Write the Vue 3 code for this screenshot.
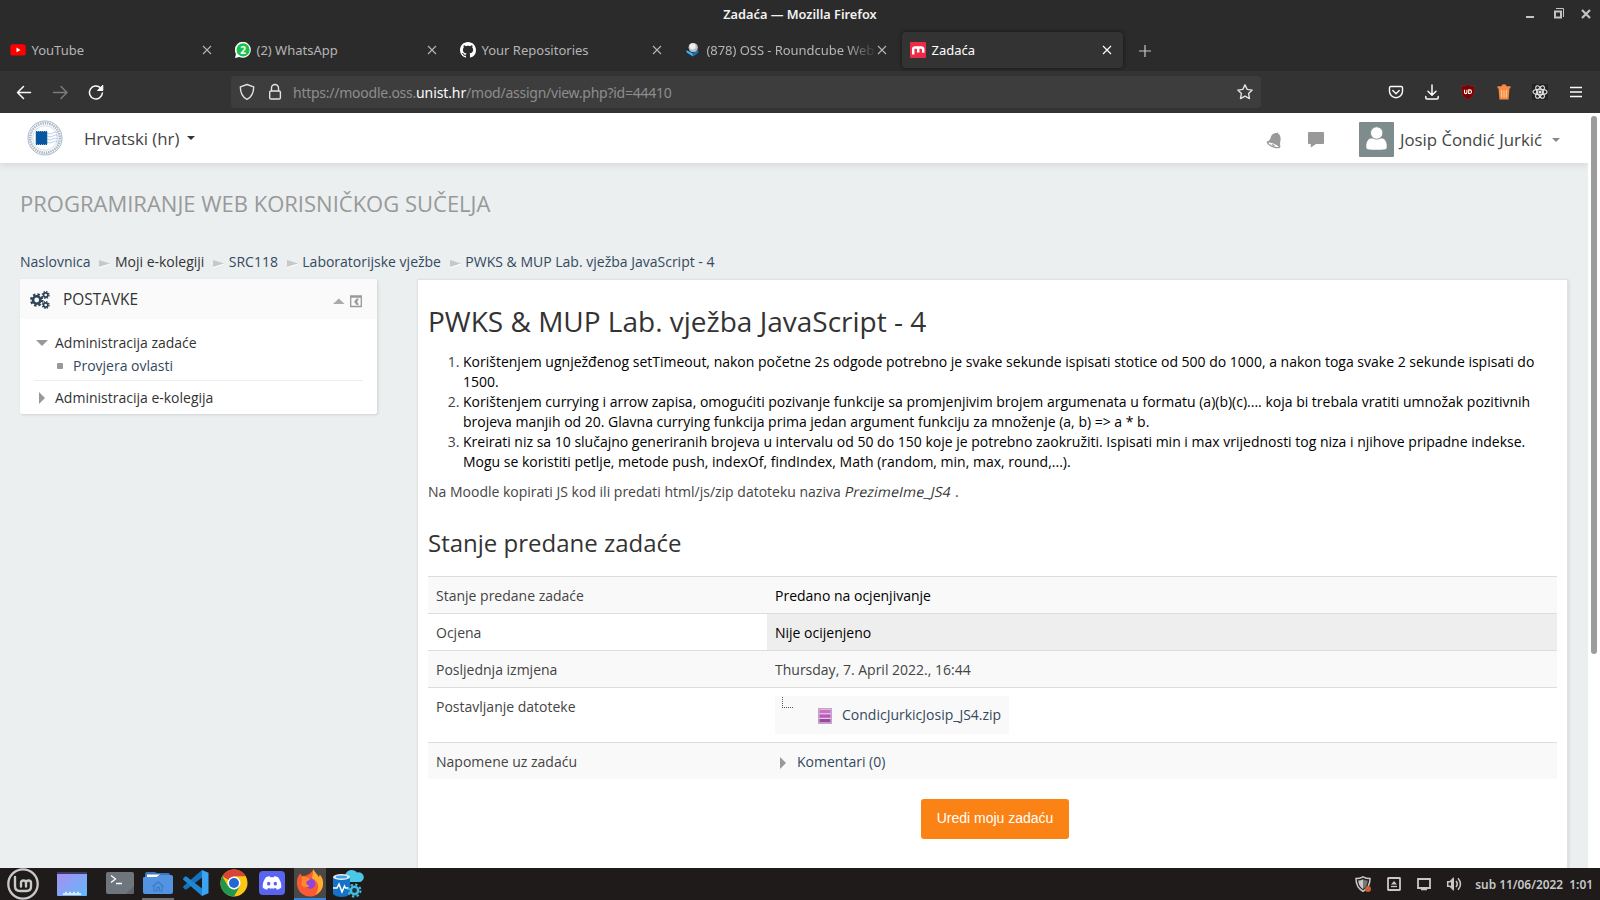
<script setup>
const tabs = [
  { id: 'youtube', title: 'YouTube' },
  { id: 'whatsapp', title: '(2) WhatsApp' },
  { id: 'github', title: 'Your Repositories' },
  { id: 'roundcube', title: '(878) OSS - Roundcube Web' },
  { id: 'moodle', title: 'Zadaća', active: true },
]
const crumbs = [
  { text: 'Naslovnica', link: true },
  { text: 'Moji e-kolegiji', link: false },
  { text: 'SRC118', link: true },
  { text: 'Laboratorijske vježbe', link: true },
  { text: 'PWKS & MUP Lab. vježba JavaScript - 4', link: true },
]
const tasks = [
  'Korištenjem ugnježđenog setTimeout, nakon početne 2s odgode potrebno je svake sekunde ispisati stotice od 500 do 1000, a nakon toga svake 2 sekunde ispisati do 1500.',
  'Korištenjem currying i arrow zapisa, omogućiti pozivanje funkcije sa promjenjivim brojem argumenata u formatu (a)(b)(c).... koja bi trebala vratiti umnožak pozitivnih brojeva manjih od 20. Glavna currying funkcija prima jedan argument funkciju za množenje (a, b) => a * b.',
  'Kreirati niz sa 10 slučajno generiranih brojeva u intervalu od 50 do 150 koje je potrebno zaokružiti. Ispisati min i max vrijednosti tog niza i njihove pripadne indekse. Mogu se koristiti petlje, metode push, indexOf, findIndex, Math (random, min, max, round,...).',
]
</script>

<template>
  <div class="screen">
    <header class="titlebar">
      <span class="window-title">Zadaća — Mozilla Firefox</span>
      <svg class="window-buttons" width="68" height="16" viewBox="0 0 68 16">
        <path d="M2 10h8v2H2z" fill="#c4c4c4" />
        <path d="M31 5.500h6v6h-6z" fill="none" stroke="#c4c4c4" stroke-width="2" />
        <path d="M32 2.500h7.500V11" fill="none" stroke="#c4c4c4" />
        <path d="M58 4l8 8M66 4l-8 8" stroke="#c4c4c4" stroke-width="2.200" />
      </svg>
    </header>

    <nav class="tabs">
      <div v-for="tab in tabs" :key="tab.id" class="tab" :class="{ active: tab.active }">
        <svg v-if="tab.id === 'youtube'" class="favicon" viewBox="0 0 16 16">
          <rect x="0.300" y="2.300" width="15.400" height="11.200" rx="2.600" fill="#f00" /><path d="M6.500 5.600v4.700L10.500 8z" fill="#fff" />
        </svg>
        <svg v-else-if="tab.id === 'whatsapp'" class="favicon" viewBox="0 0 16 16">
          <path d="M0 16l1-4A8 8 0 1 1 4.300 15z" fill="#fff" /><circle cx="8.100" cy="7.900" r="6.600" fill="#17c14b" />
          <text x="8" y="11.500" text-anchor="middle" font-size="10" font-weight="700" fill="#fff">2</text>
        </svg>
        <svg v-else-if="tab.id === 'github'" class="favicon" viewBox="0 0 16 16">
          <path fill="#fff" d="M8 0C3.580 0 0 3.580 0 8c0 3.540 2.290 6.530 5.470 7.590.4.070.55-.17.55-.38 0-.19-.01-.82-.01-1.490-2.010.37-2.530-.49-2.690-.94-.09-.23-.48-.94-.82-1.130-.28-.15-.68-.52-.01-.53.63-.01 1.080.58 1.230.82.72 1.210 1.870.87 2.330.66.07-.52.28-.87.51-1.070-1.780-.2-3.640-.89-3.640-3.950 0-.87.31-1.590.82-2.150-.08-.2-.36-1.020.08-2.120 0 0 .67-.21 2.200.82.64-.18 1.320-.27 2-.27s1.360.09 2 .27c1.530-1.040 2.200-.82 2.200-.82.44 1.100.16 1.920.08 2.120.51.56.82 1.270.82 2.150 0 3.070-1.870 3.750-3.650 3.950.29.25.54.73.54 1.480 0 1.070-.01 1.930-.01 2.200 0 .21.15.46.55.38A8 8 0 0 0 16 8c0-4.420-3.580-8-8-8z" />
        </svg>
        <svg v-else-if="tab.id === 'roundcube'" class="favicon" viewBox="0 0 16 16">
          <path d="M1.200 7.600L8 4l5.600 3.400v3.800L8 15 1.200 10.800z" fill="#123" />
          <path d="M1.500 8l6.400 3.600v3L1.500 10.600z" fill="#3fb2ed" /><path d="M7.900 11.600l5.500-4v3.500l-5.500 3.600z" fill="#1d70ae" />
          <circle cx="8.200" cy="5.600" r="4.700" fill="#b8bcbe" /><circle cx="7.600" cy="4.300" r="3.100" fill="#eee" />
        </svg>
        <svg v-else class="favicon" viewBox="0 0 16 16">
          <rect width="16" height="16" rx=".8" fill="#ee2b47" />
          <path d="M3.200 12.500V7.200Q3.200 5.500 5 5.500h6.200q2 0 2 2v3.200M8.200 6v4.600" fill="none" stroke="#fff" stroke-width="2.500" />
        </svg>
        <span class="tab-title" :class="{ faded: tab.id === 'roundcube' }">{{ tab.title }}</span>
        <svg class="tab-close" viewBox="0 0 10 10"><path d="M1 1l8 8M9 1L1 9" /></svg>
      </div>
      <svg class="new-tab" viewBox="0 0 12 12"><path d="M6 0v12M0 6h12" /></svg>
    </nav>

    <div class="toolbar">
      <svg class="nav-icons" width="120" height="32" viewBox="0 0 120 32" fill="none" stroke="#fbfbfb" stroke-width="1.500" stroke-linecap="round" stroke-linejoin="round">
        <path d="M30.500 16.500H17.500M23.500 10.500l-6 6 6 6" />
        <path d="M53.500 16.500H67M61 10.500l6 6-6 6" stroke="#7c7c7c" />
        <path d="M100.500 11.800A6.500 6.500 0 1 0 102.400 17" /><path d="M97.800 14.500h5V9.500z" fill="#fbfbfb" stroke-width="1" />
      </svg>
      <div class="urlbar">
        <svg class="url-icons" width="44" height="20" viewBox="0 0 44 20" fill="none" stroke="#e2e2e2" stroke-width="1.400" stroke-linejoin="round">
          <path d="M8 2.500l6.700 2.300c0 5.300-1.800 10.200-6.700 12.500C3.100 15 1.300 10.100 1.300 4.800z" />
          <rect x="30.700" y="9" width="10.700" height="8" rx="1.300" /><path d="M32.500 9V6a3.500 3.500 0 0 1 7 0v3" />
        </svg>
        <span class="url">https://moodle.oss.<b>unist.hr</b>/mod/assign/view.php?id=44410</span>
        <svg class="star" viewBox="0 0 18 18"><path d="M9 1.800l2.200 4.600 5 .7-3.600 3.500.9 5L9 13.200l-4.500 2.400.9-5L1.800 7.100l5-.7z" fill="none" stroke="#e2e2e2" stroke-width="1.400" stroke-linejoin="round" /></svg>
      </div>
      <div class="extensions">
        <svg viewBox="0 0 16 16" fill="none" stroke="#fbfbfb" stroke-width="1.400" stroke-linecap="round" stroke-linejoin="round"><path d="M2.800 2.500h10.400q1.300 0 1.300 1.300v3.400a6.500 6.500 0 0 1-13 0V3.800q0-1.300 1.300-1.300zM4.800 6.600L8 9.700l3.200-3.100" /></svg>
        <svg viewBox="0 0 16 16" fill="none" stroke="#fbfbfb" stroke-width="1.500" stroke-linecap="round" stroke-linejoin="round"><path d="M8 1v10M4 7.200l4 4 4-4M1.800 12.500v1.300q0 1.200 1.200 1.200h10q1.200 0 1.200-1.200v-1.300" /></svg>
        <svg viewBox="0 0 16 16"><path d="M8 .5c2 1.400 4.200 1.800 6.700 1.800 0 6.500-.7 10.300-6.700 13.400C2 12.600 1.300 8.800 1.300 2.300 3.800 2.300 6 1.900 8 .5z" fill="#800000" stroke="#6b3030" stroke-width=".7" /><path d="M4.500 5.800v2.800q0 1 1.200 1t1.200-1V5.800M8.700 5.900v3.600h1q1.800 0 1.800-1.800t-1.800-1.800z" fill="none" stroke="#fff" stroke-width="1.100" /></svg>
        <svg viewBox="0 0 16 16"><path d="M1.500 2.200h4l.7-1.700h3.600l.7 1.700h4v2h-1l-1 11.300h-9L2.500 4.200h-1z" fill="#f88c45" /><path d="M5.500 6l.3 7.500M8 6v7.500M10.500 6l-.3 7.500" stroke="#ffc79c" /></svg>
        <svg viewBox="0 0 16 16" fill="none" stroke="#e8e8e8" stroke-width="1.100"><rect width="16" height="16" fill="#242424" stroke="none" /><ellipse cx="8" cy="8" rx="7" ry="2.700" /><ellipse cx="8" cy="8" rx="7" ry="2.700" transform="rotate(60 8 8)" /><ellipse cx="8" cy="8" rx="7" ry="2.700" transform="rotate(120 8 8)" /><circle cx="8" cy="8" r="1" fill="#fff" /></svg>
        <svg viewBox="0 0 16 16" stroke="#fbfbfb" stroke-width="1.300"><path d="M2 3.500h12M2 8h12M2 12.500h12" /></svg>
      </div>
    </div>

    <div class="viewport">
      <div class="page">
        <header class="site-header">
          <svg class="crest" viewBox="0 0 36 36">
            <circle cx="18" cy="18" r="17" fill="#fff" stroke="#9db8d8" stroke-width="1" />
            <circle cx="18" cy="18" r="14.800" fill="none" stroke="#b3b8bc" stroke-width="2.600" stroke-dasharray="1.500 .8" />
            <circle cx="18" cy="18" r="12.300" fill="none" stroke="#bed0e5" stroke-width=".7" />
            <path d="M20 13q3 2 6 0t5 0M20 16q3 2 6 0t5 0M20 19q3 2 6 0t5 0M20 22q3 2 6 0t5 0" stroke="#a9c5e2" fill="none" stroke-width=".8" />
            <rect x="9" y="11.500" width="11" height="13" fill="#0757a0" stroke="#0757a0" stroke-dasharray="1 1" />
          </svg>
          <span class="language">Hrvatski (hr)</span>
          <i class="caret dark"></i>
          <div class="user-area">
            <svg class="bell" viewBox="0 0 16 18"><path d="M11.500 1.200L10.700 2C6.800 2 5.200 4.300 4.600 7 4 9 2.900 10 .9 10.500.3 11.600 1.200 13 3 14.300c2.600 1.900 7 3.300 9.700 2.900 1.400-.2 1.900-1 1.700-2-.6-1.600-.4-3 0-5.200.6-3.300.1-5.800-2.100-7.300z" fill="#999" /><path d="M2.200 11.700c2.500-.6 9 2 10.700 4.100-3 .9-8.700-1.300-10.700-4.100z" fill="#fff" /><path d="M5.300 13.600q1.500-.9 3.500.6 0 1-1 1.100-1.500-.6-2.500-1.700z" fill="#999" /></svg>
            <svg class="chat" viewBox="0 0 16 16"><path d="M1 0h14q1 0 1 1v10q0 1-1 1H8l-5.200 3.500V12H1q-1 0-1-1V1q0-1 1-1z" fill="#999" /></svg>
            <svg class="avatar" viewBox="0 0 35 35"><rect width="35" height="35" rx="1" fill="#7f8c8d" /><path d="M11 16.500c-4 2-4.500 9-3 10.600 1 1 18 1 19 0 1.500-1.600 1-8.600-3-10.600z" fill="#fff" /><circle cx="17.700" cy="11" r="6.200" fill="#fff" stroke="#7f8c8d" stroke-width=".9" /></svg>
            <span class="user-name">Josip Čondić Jurkić</span>
            <i class="caret"></i>
          </div>
        </header>

        <h1 class="course-title">PROGRAMIRANJE WEB KORISNIČKOG SUČELJA</h1>

        <nav class="breadcrumbs">
          <template v-for="(c, i) in crumbs" :key="c.text">
            <svg v-if="i" class="crumb-arrow" viewBox="0 0 11 8"><path d="M0 1l11 3.500L0 8z" fill="#fff" /><path d="M0 0l11 3.500L0 7z" fill="#c6c9ca" /></svg>
            <span :class="{ link: c.link }">{{ c.text }}</span>
          </template>
        </nav>

        <div class="columns">
          <aside class="block">
            <div class="block-head">
              <svg class="cogs" viewBox="0 0 20 18" fill="none" stroke="#2f4358">
                <circle cx="6.700" cy="9" r="3.700" stroke-width="2.600" /><circle cx="6.700" cy="9" r="5.600" stroke-width="2.200" stroke-dasharray="2.400 2" />
                <circle cx="15.700" cy="4" r="2.100" stroke-width="1.600" /><circle cx="15.700" cy="4" r="3.300" stroke-width="1.400" stroke-dasharray="1.400 1.190" />
                <circle cx="15.700" cy="14" r="2.100" stroke-width="1.600" /><circle cx="15.700" cy="14" r="3.300" stroke-width="1.400" stroke-dasharray="1.400 1.190" />
              </svg>
              <h2>POSTAVKE</h2>
              <svg class="block-actions" width="30" height="13" viewBox="0 0 30 13"><path d="M0 9l5.800-5.500L11.500 9z" fill="#aaa" /><path d="M17.700 1h10.600v10.500H17.700zM17.500 2h11" fill="none" stroke="#999" stroke-width="1.300" /><path d="M25.500 3.500v1.800h-1v3h1V10h-1.800L21 6.800l2.700-3.300z" fill="#999" /></svg>
            </div>
            <ul class="tree">
              <li><svg class="down" viewBox="0 0 12 6"><path d="M0 0h12L6 6z" fill="#999" /></svg>Administracija zadaće</li>
              <li class="leaf"><i></i><span class="link">Provjera ovlasti</span></li>
              <li class="last"><svg class="right" viewBox="0 0 6 12"><path d="M0 0l6 6-6 6z" fill="#999" /></svg>Administracija e-kolegija</li>
            </ul>
          </aside>

          <main class="content">
            <h2>PWKS &amp; MUP Lab. vježba JavaScript - 4</h2>
            <ol><li v-for="t in tasks" :key="t"><span>{{ t }}</span></li></ol>
            <p>Na Moodle kopirati JS kod ili predati html/js/zip datoteku naziva <em>PrezimeIme_JS4</em> .</p>
            <h3>Stanje predane zadaće</h3>
            <div class="status">
              <div class="row odd"><span>Stanje predane zadaće</span><span class="strong">Predano na ocjenjivanje</span></div>
              <div class="row"><span>Ocjena</span><span class="strong grade">Nije ocijenjeno</span></div>
              <div class="row odd"><span>Posljednja izmjena</span><span>Thursday, 7. April 2022., 16:44</span></div>
              <div class="row tall"><span>Postavljanje datoteke</span>
                <span class="files"><span class="file">
                  <i class="elbow"></i>
                  <svg class="zip" viewBox="0 0 16 16"><rect x="1.500" y=".5" width="13" height="15" fill="#d9b9df" stroke="#c3a5c9" /><path d="M2.500 2h11v3.300h-11z" fill="#cb6fc5" /><path d="M2.500 6.300h11v3.500h-11z" fill="#b759b5" /><path d="M2.500 11h11v3.300h-11z" fill="#984a9f" /><path d="M2.500 5.800h11M2.500 10.400h11" stroke="#ecd2ef" stroke-width=".7" /></svg>
                  <span class="link">CondicJurkicJosip_JS4.zip</span>
                </span></span>
              </div>
              <div class="row odd"><span>Napomene uz zadaću</span><span class="comments"><svg class="right" viewBox="0 0 6 12"><path d="M0 0l6 6-6 6z" fill="#999" /></svg><span class="link">Komentari (0)</span></span></div>
            </div>
            <button class="edit">Uredi moju zadaću</button>
          </main>
        </div>
      </div>
      <div class="scrollbar"><i></i></div>
    </div>

    <footer class="taskbar">
      <svg class="mint" viewBox="0 0 32 32" fill="none" stroke="#c9c9c9" stroke-linecap="round"><circle cx="16" cy="16" r="14.700" stroke-width="2.300" /><path d="M8 9v9q0 5 5 5h6.500q4.500 0 4.500-4.500V15q0-2.500-2.500-2.500T19 15v3.500M19 15q0-2.500-2.500-2.500T14 15v3.500" stroke-width="2.400" /></svg>
      <svg class="desktop" viewBox="0 0 30 24"><defs><linearGradient id="desk" x1="0" y1="0" x2="1" y2="1"><stop stop-color="#a88df0" /><stop offset="1" stop-color="#62b9fa" /></linearGradient></defs><rect width="30" height="24" rx="1" fill="url(#desk)" /><path d="M0 0h30v2H0z" fill="#3b3a68" /><path d="M6 23h18v-2H6z" fill="#d3e8fb" /><path d="M8 20.500h14" stroke="#d3e8fb" stroke-width="1.500" stroke-dasharray="2 2" /></svg>
      <svg class="terminal" viewBox="0 0 28 22"><rect width="28" height="22" rx="2" fill="#6e757d" /><path d="M28 14v6q0 2-2 2h-6z" fill="#5e646b" /><path d="M5 3.500l4.500 3.500L5 10.500M10 11.500h6" fill="none" stroke="#fff" stroke-width="1.300" /></svg>
      <span class="running"><svg class="folder" viewBox="0 0 30 22"><path d="M2 2q0-2 2-2h8l2 1h11q2 0 2 2v4H2z" fill="#3e77bd" /><path d="M4 2.500h13l-3 2.500H4z" fill="#fff" /><path d="M0 6q0-1 1-1h13l3-2h11q2 0 2 2v15q0 2-2 2H2q-2 0-2-2z" fill="#5294e2" /><path d="M9.500 14.500L15 9.800l5.500 4.700M11 13.500V19h3v-3.500h2.500V19H19v-5.500" fill="none" stroke="#3f79c0" stroke-width="1.100" /></svg></span>
      <svg class="vscode" viewBox="0 0 26 26"><path d="M19 0v7.500L3.500 19.400 2 19.500 0 17.300l.1-.9z" fill="#1374bd" /><path d="M19 26v-7.500L3.500 6.600 2 6.500 0 8.700l.1.900z" fill="#1f86d3" /><path d="M19 0l6.500 2.800v20.400L19 26z" fill="#3ba5f3" /></svg>
      <svg class="chrome" viewBox="0 0 28 28"><circle cx="14" cy="14" r="13.500" fill="#fbc716" /><path d="M14 14L2.300 7.250A13.500 13.500 0 0 1 25.700 7.250z" fill="#da4437" /><path d="M14 7.250h11.700L19.850 17.400z" fill="#fbc716" /><path d="M2.300 7.250L8.200 17.400 14 20.700l-2.500 6.600A13.500 13.500 0 0 1 2.300 7.250z" fill="#22964f" /><path d="M8 17l6 3.700 5.800-3.400L14 27.500l-2.500-.2z" fill="#22964f" /><circle cx="14" cy="14" r="6.500" fill="#fff" /><circle cx="14" cy="14" r="5" fill="#2467d2" /></svg>
      <svg class="discord" viewBox="0 0 26 24"><rect width="26" height="24" rx="4" fill="#5865f2" /><path d="M7 6.300q2-.9 3.700-1l.5 1q1.800-.3 3.600 0l.5-1q1.800.1 3.700 1Q22.700 10.500 22.200 16.700q-2 1.600-4.300 2l-1-1.700q-3.900 1.200-7.800 0l-1 1.700q-2.300-.4-4.300-2Q3.300 10.500 7 6.300z" fill="#fff" /><ellipse cx="9.700" cy="12.700" rx="1.700" ry="1.900" fill="#5865f2" /><ellipse cx="16.300" cy="12.700" rx="1.700" ry="1.900" fill="#5865f2" /></svg>
      <span class="running current"><svg class="firefox" viewBox="0 0 28 28"><path d="M17.500 0c1.200 4 4.200 5.300 5.200 8 .9-.5 1-1.500 1-2.600 3 3.600 3.700 7 3.300 10.600A13 13 0 0 1 1.300 17C.3 12 1.300 7 4.500 4.500L6 7.300l3-.5C12 5.800 15.300 4.500 17.500 0z" fill="#fb5b32" /><path d="M17.500 0c1.200 4 4.200 5.300 5.200 8 .9-.5 1-1.500 1-2.600 3 3.600 3.700 7 3.300 10.600-.7 5-4.300 8.500-7.500 9.500 4-5 4-13-3.500-16z" fill="#fdae2b" /><circle cx="14" cy="14.500" r="5.300" fill="#9045df" /><path d="M6 7.300c3 .3 5 1.700 8.500 2.500-1 2-3.500 1.400-4.300 3.300 0 1.800 1.300 3.300 3.300 3.900-2 2.200-6.300 1.700-8-1.300z" fill="#ff8928" /></svg></span>
      <svg class="database" viewBox="0 0 30 28"><path d="M13 13a4.600 4.600 0 0 1-.5-8A6.800 6.800 0 0 1 24 3.500a5 5 0 0 1 3.500 9.500H14z" fill="#4bc8e6" /><path d="M0 8v17q3 3 8.500 3t8.500-3V8z" fill="#1472c8" /><ellipse cx="8.500" cy="8" rx="8.500" ry="3" fill="#eee" /><ellipse cx="8.500" cy="8" rx="6" ry="1.600" fill="#39a7e7" /><path d="M0 19h4l2-4 3 8 2.500-6 1 2h3" fill="none" stroke="#fff" stroke-width="1.500" /><circle cx="21.500" cy="21.500" r="3.700" fill="#24343e" stroke="#40bde0" stroke-width="2.500" /><circle cx="21.500" cy="21.500" r="6" fill="none" stroke="#40bde0" stroke-width="2" stroke-dasharray="2.350 2.350" /></svg>
      <div class="tray">
        <svg viewBox="0 0 16 16"><path d="M8 .8q3 1.800 7 1.800 0 9-7 12.700Q1 11.600 1 2.600q4 0 7-1.800z" fill="none" stroke="#c8c8c8" stroke-width="1.500" /><path d="M8 3.200v10Q3.300 10 3.300 4.500 6 4.500 8 3.200z" fill="#c8c8c8" /><path d="M8 3.200v10q4.700-3.200 4.700-8.700Q10 4.500 8 3.200z" fill="#777" /><circle cx="13" cy="13" r="3" fill="#c95f32" /></svg>
        <svg viewBox="0 0 16 16" fill="none" stroke="#c8c8c8"><rect x="2" y="2" width="12" height="12" rx=".5" stroke-width="1.800" /><path d="M5 8.500L8 5l3 3.500z" fill="#c8c8c8" stroke="none" /><path d="M5 10.500h6" stroke-width="1.300" /></svg>
        <svg viewBox="0 0 16 16" fill="none" stroke="#c8c8c8"><path d="M2 3h12v9H2z" stroke-width="1.800" /><path d="M5 13.500h6" stroke-width="1.600" /></svg>
        <svg viewBox="0 0 16 16" fill="none" stroke="#c8c8c8" stroke-width="1.500"><path d="M1.700 5.700H4L7 2.800v10.400l-3-2.900H1.700z" /><path d="M5 5l3-3v12l-3-3z" fill="#c8c8c8" stroke="none" /><path d="M10 5q2.500 3 0 6M12 2.200q5 5.800 0 11.600" /></svg>
        <span class="clock">sub 11/06/2022&nbsp; 1:01</span>
      </div>
    </footer>
  </div>
</template>

<style>
html, body { margin: 0; overflow: hidden; background: #2b2b2b; }
</style>

<style scoped>
* { box-sizing: border-box; }
svg { display: block; flex: none; }
.screen { width: 1600px; height: 900px; display: flex; flex-direction: column; overflow: hidden; font-family: "Open Sans", sans-serif; font-size: 14px; line-height: 20px; color: #444; }

.titlebar { height: 28px; display: grid; grid-template-columns: 1fr auto 1fr; align-items: center; background: #2b2b2b; color: #f2f2f2; font-family: "Noto Sans", sans-serif; }
.window-title { grid-column: 2; font-size: 12.750px; font-weight: 600; white-space: nowrap; }
.window-buttons { justify-self: end; margin-right: 8px; }

.tabs { height: 43px; display: flex; padding-left: 2px; background: #2b2b2b; font-family: "Noto Sans", sans-serif; font-size: 13px; color: #b5b5b5; }
.tab { width: 221px; height: 36px; margin: 4px 4px 0 0; padding: 0 11px 0 8px; display: flex; align-items: center; border-radius: 4px; }
.tab.active { background: #333; color: #fff; box-shadow: 0 0 4px rgba(0, 0, 0, .55); }
.favicon { width: 16px; height: 16px; margin-right: 5.500px; }
.tab-title { flex: 1; min-width: 0; white-space: nowrap; line-height: 20px; }
.faded { letter-spacing: -.05px; -webkit-mask-image: linear-gradient(90deg, #000 82%, transparent); mask-image: linear-gradient(90deg, #000 82%, transparent); }
.tab-close { width: 10px; height: 10px; stroke: currentColor; stroke-width: 1.100; }
.new-tab { width: 12px; height: 12px; margin: 17px 0 0 12px; stroke: #c8c8c8; stroke-width: 1.200; }

.toolbar { height: 42px; display: flex; align-items: center; background: #333; }
.nav-icons { margin-right: 111px; }
.urlbar { width: 1030px; height: 32px; display: flex; align-items: center; padding: 0 8px; background: #3d3d3d; border-radius: 4px; }
.url { flex: 1; margin-left: 10px; padding-top: 2px; font-family: "Noto Sans", sans-serif; font-size: 14px; letter-spacing: -.25px; color: #8d8d8d; white-space: nowrap; }
.url b { font-weight: 400; letter-spacing: -.1px; color: #fbfbfb; }
.star { width: 18px; height: 18px; margin-right: -1px; }
.extensions { display: flex; gap: 20px; margin-left: 127px; }
.extensions svg { width: 16px; height: 16px; }

.viewport { height: 755px; display: flex; background: #fff; }
.page { width: 1588px; background: #ebeff0; overflow: hidden; }
.scrollbar { width: 12px; padding: 3px 0 0 3px; }
.scrollbar i { display: block; width: 6px; height: 538px; border-radius: 3px; background: #9c9c9c; }

.site-header { height: 50px; display: flex; align-items: center; padding: 0 28px 0 26.500px; background: #fff; box-shadow: 0 2px 8px rgba(0, 0, 0, .1); font-size: 16.800px; color: #444; }
.crest { width: 36px; height: 36px; margin: -1px 21.500px 0 0; }
.language { white-space: nowrap; margin-top: 2px; }
.caret { width: 0; height: 0; margin-left: 10px; border: 4px solid transparent; border-top-color: #888; border-bottom: 0; }
.caret.dark { margin-left: 8px; border-top-color: #333; margin-top: -1px; }
.user-area { margin-left: auto; display: flex; align-items: center; padding-top: 3px; }
.bell { width: 16px; height: 18px; margin-right: 26px; }
.chat { width: 16px; height: 16px; margin-right: 35px; }
.avatar { width: 35px; height: 35px; margin-right: 6px; }
.user-name { white-space: nowrap; }

.course-title { margin: 25px 0 0 20px; font-size: 22px; line-height: 30px; font-weight: 400; color: #999; white-space: nowrap; }
.breadcrumbs { height: 20px; display: flex; align-items: center; margin: 34px 0 7px 20px; color: #333; white-space: nowrap; }
.crumb-arrow { width: 11px; height: 8px; margin: 4px 4.700px 0 8.700px; }
.link { color: #34495e; }

.columns { display: flex; align-items: flex-start; margin-left: 20px; }
.block { width: 357px; height: 135px; margin-right: 40px; background: #fff; border-radius: 2px; box-shadow: 1px 1px 3px rgba(0, 0, 0, .12); }
.block-head { height: 40px; display: flex; align-items: center; padding: 0 14px 0 10px; background: #fafafa; }
.cogs { width: 20px; height: 18px; margin: 1px 13px 0 0; }
.block-head h2 { margin: 2px 0 0; font-size: 15.400px; font-weight: 400; color: #333; }
.block-actions { margin: 4px 0 0 auto; }
.tree { margin: 0; padding: 12px 14px 0; list-style: none; color: #333; }
.tree li { height: 23px; display: flex; align-items: center; }
.down { width: 12px; height: 6px; margin: 0 7px 0 2px; }
.right { width: 6px; height: 12px; }
.tree .right { margin: 0 10px 0 5px; }
.leaf i { width: 6px; height: 6px; margin: 0 10px 0 23px; background: #999; border-radius: 1px; }
.tree .last { height: 34px; margin-top: 3px; border-top: 1px solid #eee; }

.content { width: 1151px; height: 620px; padding: 21px 10px 0; background: #fff; border: 1px solid #e1e3e3; box-shadow: 1px 1px 3px rgba(0, 0, 0, .1); }
.content h2 { margin: 0 0 12px; font-size: 28px; line-height: 40px; font-weight: 400; color: #333; }
.content ol { margin: -1px 0 0; padding: 0 0 0 35px; }
.content ol span { color: #000; }
.content p { margin: 10px 0 0; }
.content em { display: inline-block; margin-left: 1px; font-style: normal; font-weight: 500; letter-spacing: .2px; transform: skewX(-12deg); color: #333; }
.content h3 { margin: 21px 0 13px; font-size: 24px; line-height: 40px; font-weight: 400; color: #333; }
.row { height: 37px; display: grid; grid-template-columns: 339px 1fr; border-top: 1px solid #ddd; }
.row > span { padding: 9px 8px 7px; }
.row.odd { background: #f9f9f9; }
.row.tall { height: 55px; }
.row > .files { padding-top: 8px; }
.strong { color: #000; }
.grade { background: #eee; }
.file { width: 234px; height: 38px; display: flex; align-items: center; background: #f9f9f9; padding-left: 7px; }
.elbow { align-self: flex-start; width: 11px; height: 11px; margin: 1px 24px 0 0; border-left: 1px dotted #555; border-bottom: 1px dotted #555; }
.zip { width: 16px; height: 16px; margin: 2px 9px 0 0; }
.comments { display: flex; align-items: center; }
.comments .right { margin: 2px 11px 0 5px; }
.edit { display: block; width: 148px; height: 40px; margin: 20px 0 0 493px; padding: 0 0 2px; border: 0; border-radius: 3px; background: #fb8214; color: #fff; font-family: "Liberation Sans", Arial, sans-serif; font-size: 14px; }

.taskbar { height: 32px; display: flex; align-items: center; background: #1f1b1a; }
.mint { width: 32px; height: 32px; margin: 0 18px 0 7px; }
.desktop { width: 30px; height: 24px; margin-right: 19px; }
.terminal { width: 28px; height: 22px; margin: -2px 8px 0 0; }
.running { width: 32px; height: 32px; display: flex; justify-content: center; border-bottom: 2px solid #707070; }
.folder { width: 30px; height: 22px; margin-top: 4px; }
.vscode { width: 26px; height: 26px; margin: -2px 11px 0 9px; }
.chrome { width: 28px; height: 28px; margin: -2px 11px 0 0; }
.discord { width: 26px; height: 24px; margin: -2px 9px 0 0; }
.current { background: #4a4847; border-color: #3584e4; }
.firefox { width: 28px; height: 28px; margin-top: 1px; }
.database { width: 30px; height: 28px; margin: -2px 0 0 7px; overflow: visible; }
.tray { margin-left: auto; display: flex; align-items: center; padding-right: 7px; }
.tray svg { width: 16px; height: 16px; margin-right: 14px; }
.tray svg:nth-of-type(1) { margin-right: 15px; }
.tray svg:nth-of-type(4) { margin-right: 13px; }
.clock { font-family: "Noto Sans", sans-serif; font-size: 11.900px; font-weight: 600; color: #c8c8c8; white-space: nowrap; }
</style>
